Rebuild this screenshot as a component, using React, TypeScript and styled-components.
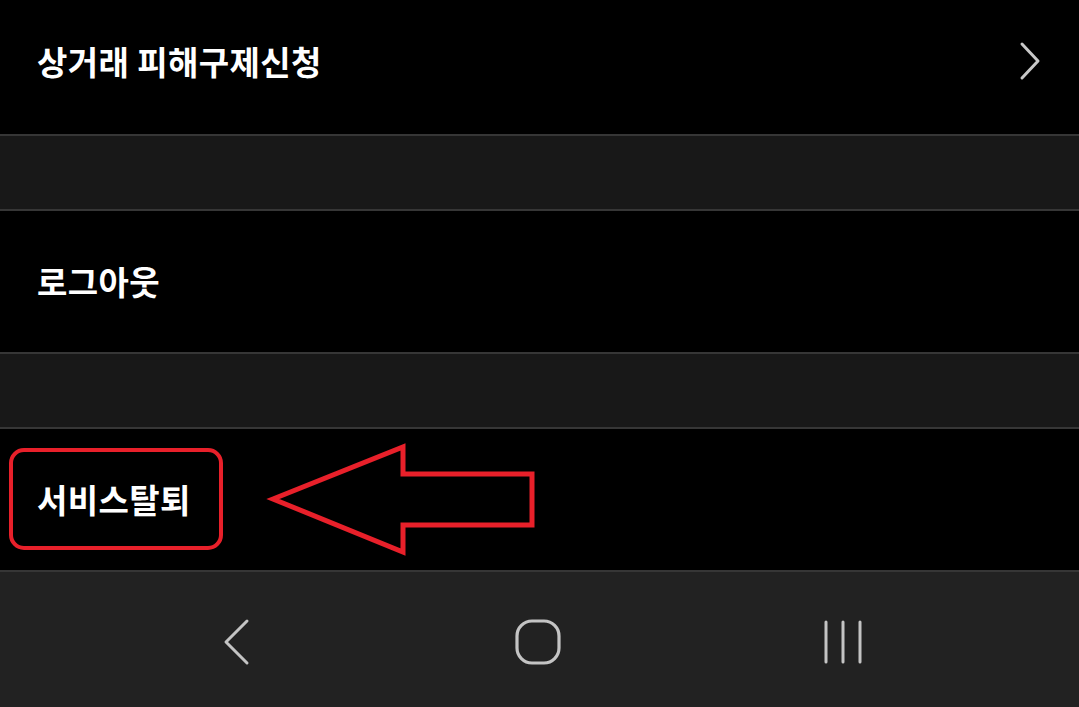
import React from 'react';
import styled, { createGlobalStyle } from 'styled-components';

const GlobalStyle = createGlobalStyle`
    html, body {
        margin: 0;
        padding: 0;
        background: #000000;
    }
    body {
        font-family: "Noto Sans CJK KR", "Noto Sans", sans-serif;
        overflow: hidden;
    }
`;

const Screen = styled.div`
    width: 1079px;
    height: 707px;
    display: flex;
    flex-direction: column;
    background: #000000;
    position: relative;
    overflow: hidden;
`;
const Row = styled.div<{h: number, shift?: number}>`
    height: ${p=>p.h}px;
    display: flex;
    align-items: center;
    justify-content: space-between;
    padding: 0 38px 0 37px;
    padding-bottom: ${p=>p.shift || 0}px;
    box-sizing: border-box;
    background: #000000;
`;
const Label = styled.span`
    color: #FFFFFF;
    font-size: 33px;
    font-weight: 700;
    line-height: 1;
    letter-spacing: 0.4px;
`;
const Divider = styled.div`
    height: 2px;
    background: #363636;
`;
const Gap = styled.div`
    height: 73px;
    background: #181818;
`;
const NavBar = styled.div`
    flex: 1;
    background: #222222;
    display: grid;
    grid-template-columns: 222px 36px 257px 46px 261px 40px 1fr;
    align-items: center;
    padding-top: 5px;
`;
const NavIcon = styled.svg`
    grid-column: ${p=>p.id};
    display: block;
`;
const Highlight = styled.div`
    position: absolute;
    left: 9px;
    top: 448px;
    width: 214px;
    height: 102px;
    box-sizing: border-box;
    border: 4px solid #E8202A;
    border-radius: 15px;
`;
const Arrow = styled.svg`
    position: absolute;
    left: 260px;
    top: 436px;
`;

const App = () => {
    return (
        <Screen>
            <GlobalStyle />
            <Row h={134} shift={12}>
                <Label>상거래 피해구제신청</Label>
                <svg width="22" height="40" viewBox="0 0 22 40">
                    <polyline points="3,3 19,20 3,37" fill="none" stroke="#C8C8C8" strokeWidth="3" strokeLinecap="round" strokeLinejoin="round"/>
                </svg>
            </Row>
            <Divider />
            <Gap />
            <Divider />
            <Row h={141}>
                <Label>로그아웃</Label>
            </Row>
            <Divider />
            <Gap />
            <Divider />
            <Row h={141}>
                <Label>서비스탈퇴</Label>
            </Row>
            <Divider />
            <NavBar>
                <NavIcon id="2" width="30" height="48" viewBox="0 0 30 48">
                    <polyline points="25,3 4,24 25,45" fill="none" stroke="#C4C4C4" strokeWidth="3" strokeLinecap="round" strokeLinejoin="round"/>
                </NavIcon>
                <NavIcon id="4" width="46" height="46" viewBox="0 0 46 46">
                    <rect x="2" y="2" width="42" height="42" rx="15" fill="none" stroke="#C4C4C4" strokeWidth="3.2"/>
                </NavIcon>
                <NavIcon id="6" width="42" height="46" viewBox="0 0 42 46">
                    <line x1="4" y1="3" x2="4" y2="43" stroke="#C4C4C4" strokeWidth="3" strokeLinecap="round"/>
                    <line x1="21" y1="3" x2="21" y2="43" stroke="#C4C4C4" strokeWidth="3" strokeLinecap="round"/>
                    <line x1="38" y1="3" x2="38" y2="43" stroke="#C4C4C4" strokeWidth="3" strokeLinecap="round"/>
                </NavIcon>
            </NavBar>
            <Highlight />
            <Arrow width="285" height="128" viewBox="0 0 285 128">
                <polygon points="13,63 143,11 143,38 272,38 272,89 143,89 143,116" fill="none" stroke="#E8202A" strokeWidth="5" strokeLinejoin="miter"/>
            </Arrow>
        </Screen>
    );
}
export default App;
